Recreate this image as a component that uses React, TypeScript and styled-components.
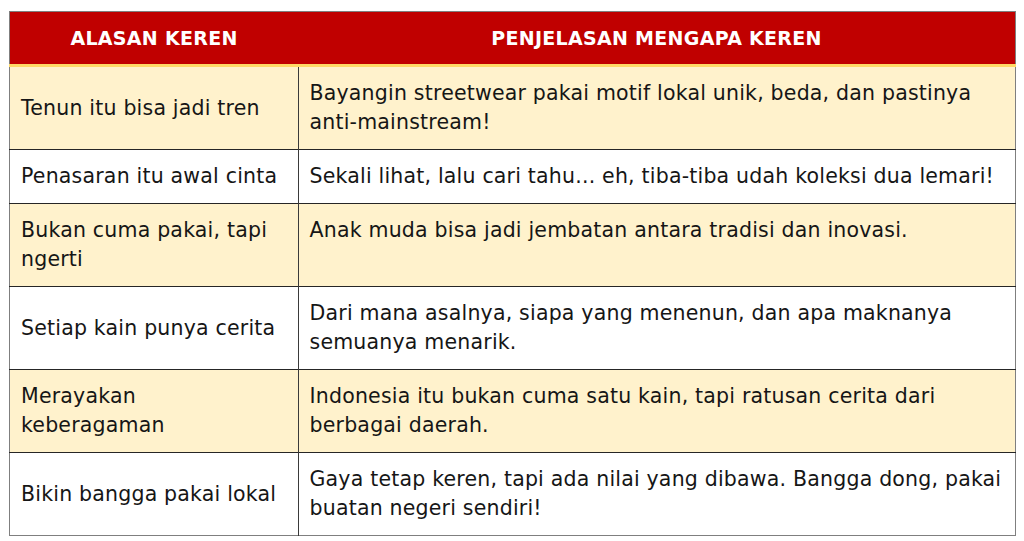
import React from 'react';
import styled, { createGlobalStyle } from 'styled-components';

const GlobalStyle = createGlobalStyle`
  html, body {
    margin: 0;
    padding: 0;
    background: #ffffff;
  }
  body {
    font-family: 'DejaVu Sans', 'Liberation Sans', sans-serif;
  }
`;

const Page = styled.div`
  width: 1024px;
  height: 541px;
  padding: 11px 10px 0 9px;
  box-sizing: border-box;
`;

const Table = styled.table`
  width: 1005px;
  border-collapse: collapse;
  table-layout: fixed;
  border: 1px solid #7f7f7f;
`;

const HeadCell = styled.th<{ w: number }>`
  width: ${(p) => p.w}px;
  height: 52px;
  padding: 0;
  background: #c00000;
  color: #ffffff;
  font-family: 'DejaVu Sans', sans-serif;
  font-weight: bold;
  font-size: 19px;
  letter-spacing: 0.3px;
  text-align: center;
  vertical-align: middle;
  border-bottom: 3px solid #ffd966;
`;

const Row = styled.tr<{ shaded: boolean }>`
  background: ${(p) => (p.shaded ? '#fff2cc' : '#ffffff')};
  border-top: 1px solid #262626;
`;

const Cell = styled.td<{ align: 'middle' | 'top'; divider?: boolean }>`
  padding: 12px ${(p) => (p.divider ? 16 : 2)}px 12px 11px;
  font-family: 'DejaVu Sans', sans-serif;
  font-size: 20.5px;
  line-height: 29px;
  letter-spacing: 0.2px;
  color: #161616;
  text-align: left;
  vertical-align: ${(p) => p.align};
  border-right: ${(p) => (p.divider ? '1px solid #3a3a3a' : 'none')};
`;

const rows: [string, string][] = [
  ['Tenun itu bisa jadi tren', 'Bayangin streetwear pakai motif lokal unik, beda, dan pastinya anti-mainstream!'],
  ['Penasaran itu awal cinta', 'Sekali lihat, lalu cari tahu... eh, tiba-tiba udah koleksi dua lemari!'],
  ['Bukan cuma pakai, tapi ngerti', 'Anak muda bisa jadi jembatan antara tradisi dan inovasi.'],
  ['Setiap kain punya cerita', 'Dari mana asalnya, siapa yang menenun, dan apa maknanya semuanya menarik.'],
  ['Merayakan keberagaman', 'Indonesia itu bukan cuma satu kain, tapi ratusan cerita dari berbagai daerah.'],
  ['Bikin bangga pakai lokal', 'Gaya tetap keren, tapi ada nilai yang dibawa. Bangga dong, pakai buatan negeri sendiri!'],
];

export default function App() {
  return (
    <>
      <GlobalStyle />
      <Page>
        <Table>
          <thead>
            <tr>
              <HeadCell w={288}>ALASAN KEREN</HeadCell>
              <HeadCell w={717}>PENJELASAN MENGAPA KEREN</HeadCell>
            </tr>
          </thead>
          <tbody>
            {rows.map(([reason, detail], i) => (
              <Row key={reason} shaded={i % 2 === 0}>
                <Cell align="middle" divider>
                  {reason}
                </Cell>
                <Cell align="top">{detail}</Cell>
              </Row>
            ))}
          </tbody>
        </Table>
      </Page>
    </>
  );
}
